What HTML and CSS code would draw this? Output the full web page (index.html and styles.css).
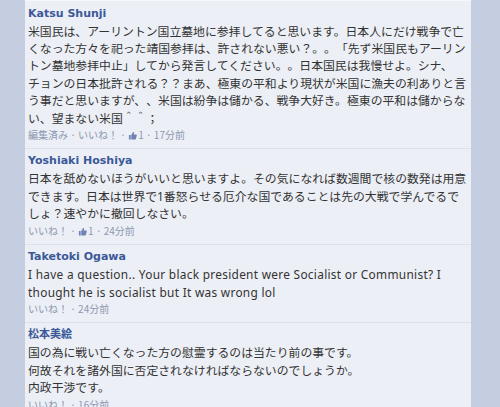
FILE: index.html
```html
<!DOCTYPE html>
<html lang="ja">
<head>
<meta charset="utf-8">
<link rel="stylesheet" href="styles.css">
</head>
<body>
<div class="page">
  <div class="side"></div>
  <div class="panel">
    <div class="comment first">
      <div class="name">Katsu Shunji</div>
      <div class="body">米国民は、アーリントン国立墓地に参拝してると思います。日本人にだけ戦争で亡くなった方々を祀った靖国参拝は、許されない悪い？。。「先ず米国民もアーリントン墓地参拝中止」してから発言してください。。日本国民は我慢せよ。シナ、チョンの日本批許される？？まあ、極東の平和より現状が米国に漁夫の利ありと言う事だと思いますが、、米国は紛争は儲かる、戦争大好き。極東の平和は儲からない、望まない米国＾＾；</div>
      <div class="meta">編集済み · いいね！ · <svg class="thumb" viewBox="0 0 10 10"><path d="M1 4.5h2v5H1z M3.6 9.5V4.6L5.6 1.2c.6-.4 1.3 0 1.2.8L6.4 4h2.4c.7 0 1.1.6.9 1.2L8.7 8.9c-.2.4-.5.6-.9.6z"/></svg>1 · 17分前</div>
    </div>
    <div class="comment">
      <div class="name">Yoshiaki Hoshiya</div>
      <div class="body">日本を舐めないほうがいいと思いますよ。その気になれば数週間で核の数発は用意できます。日本は世界で1番怒らせる厄介な国であることは先の大戦で学んでるでしょ？速やかに撤回しなさい。</div>
      <div class="meta">いいね！ · <svg class="thumb" viewBox="0 0 10 10"><path d="M1 4.5h2v5H1z M3.6 9.5V4.6L5.6 1.2c.6-.4 1.3 0 1.2.8L6.4 4h2.4c.7 0 1.1.6.9 1.2L8.7 8.9c-.2.4-.5.6-.9.6z"/></svg>1 · 24分前</div>
    </div>
    <div class="comment">
      <div class="name">Taketoki Ogawa</div>
      <div class="body latin">I have a question.. Your black president were Socialist or Communist? I thought he is socialist but It was wrong lol</div>
      <div class="meta">いいね！ · 24分前</div>
    </div>
    <div class="comment">
      <div class="name">松本美絵</div>
      <div class="body">国の為に戦い亡くなった方の慰霊するのは当たり前の事です。<br>何故それを諸外国に否定されなければならないのでしょうか。<br>内政干渉です。</div>
      <div class="meta">いいね！ · 16分前</div>
    </div>
  </div>
  <div class="side"></div>
</div>
</body>
</html>
```

FILE: styles.css
```css
html, body {
  margin: 0;
  padding: 0;
  height: 100%;
  overflow: hidden;
}
body {
  background: #eceff5;
}
.page {
  display: flex;
  height: 407px;
  width: 500px;
}
.side {
  width: 25px;
  flex: none;
  background: #c5cde0;
}
.side:last-child {
  width: 29px;
}
.panel {
  flex: 1;
  background: #eceff5;
  border-top: 1px solid #f6f7fa;
  overflow: hidden;
}
.comment {
  padding: 3.5px 1px 4.5px 3px;
  border-bottom: 1px solid #dde0e8;
}
.name {
  font-family: "DejaVu Sans", "Noto Sans CJK JP", sans-serif;
  font-weight: bold;
  font-size: 11px;
  line-height: 18px;
  color: #3b5998;
}
.body {
  font-family: "Noto Sans", "Noto Sans CJK JP", sans-serif;
  font-size: 11.85px;
  line-height: 17.4px;
  color: #333333;
  line-break: strict;
  text-spacing-trim: space-all;
}
.body.latin {
  letter-spacing: 0.3px;
}
.meta {
  font-family: "Noto Sans CJK JP", sans-serif;
  font-size: 10px;
  line-height: 16px;
  margin-top: 0.5px;
  color: #8d98b2;
  text-spacing-trim: space-all;
}
.thumb {
  width: 9px;
  height: 9px;
  fill: #6f84b4;
  vertical-align: -1px;
  margin-right: 1px;
}
```
